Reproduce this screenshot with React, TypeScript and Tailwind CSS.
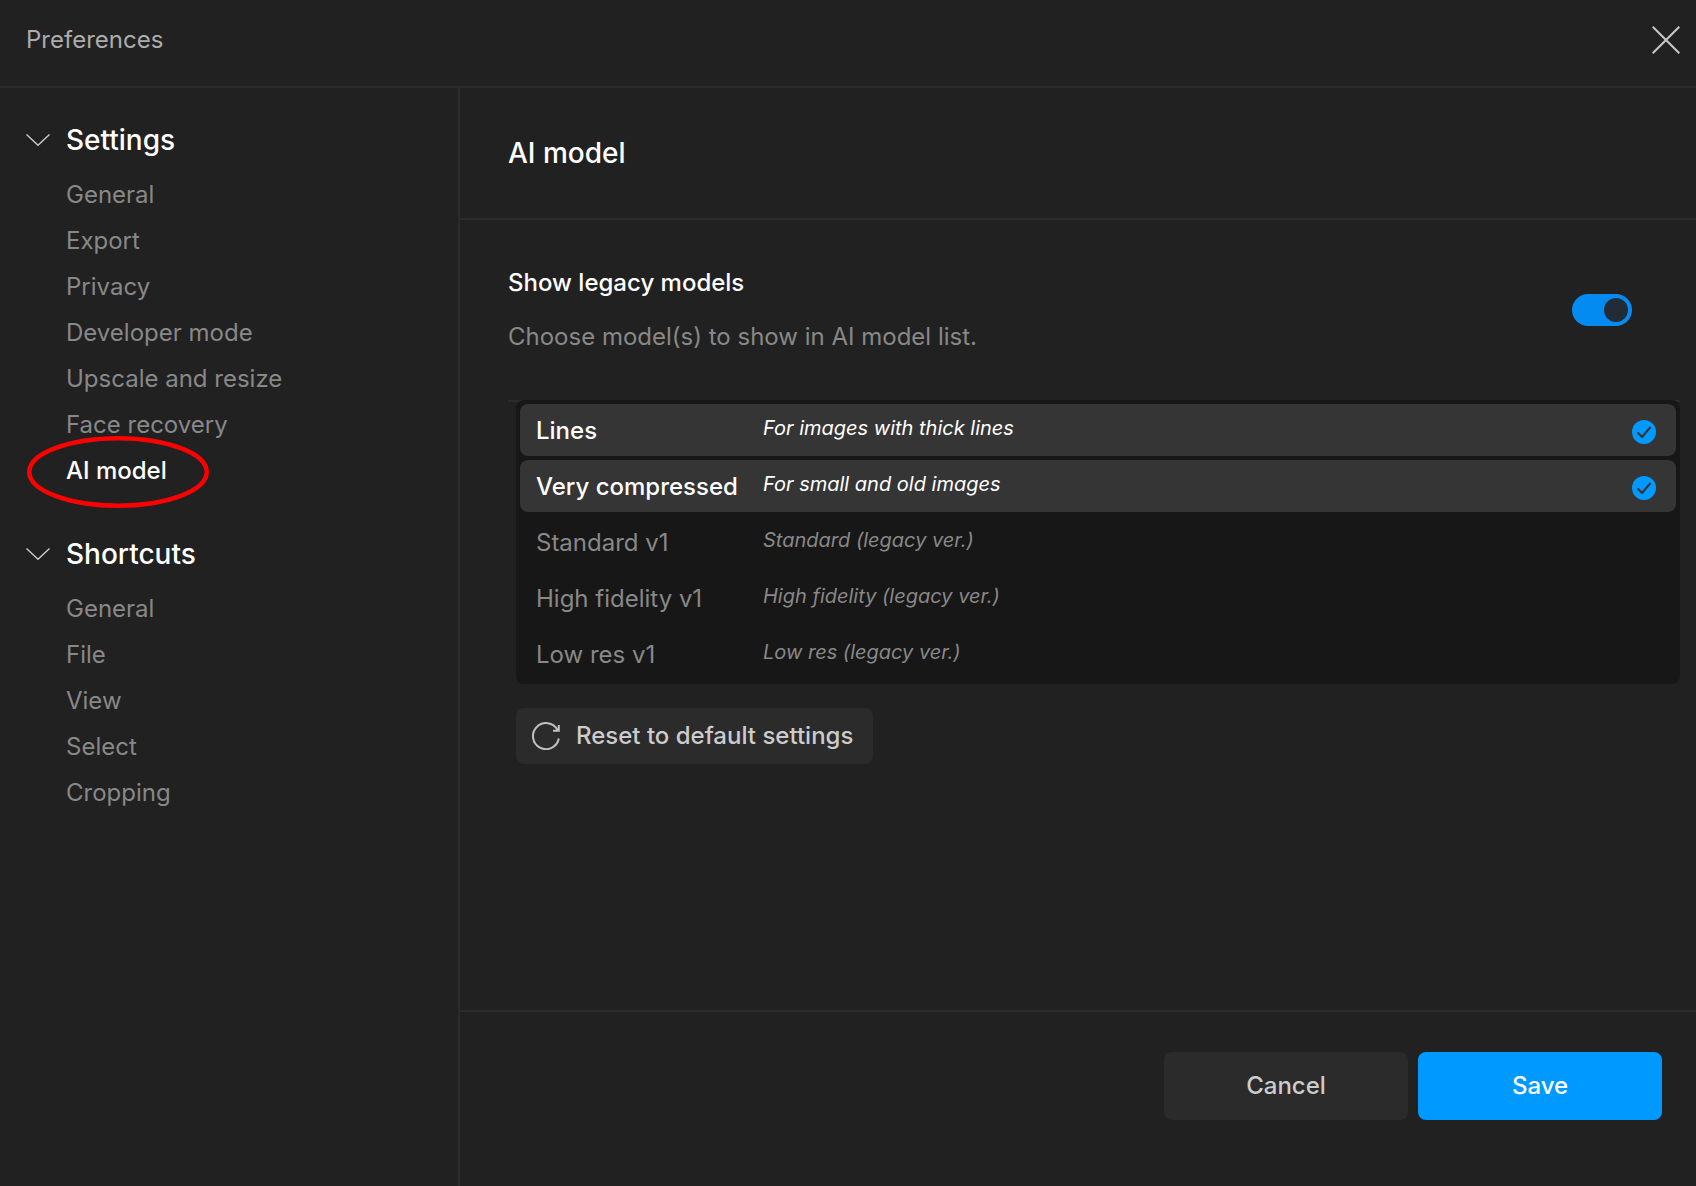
import { useState } from "react";

const groups = [
  {
    title: "Settings",
    items: ["General", "Export", "Privacy", "Developer mode", "Upscale and resize", "Face recovery", "AI model"],
  },
  { title: "Shortcuts", items: ["General", "File", "View", "Select", "Cropping"] },
];

const models = [
  { name: "Lines", note: "For images with thick lines", on: true },
  { name: "Very compressed", note: "For small and old images", on: true },
  { name: "Standard v1", note: "Standard (legacy ver.)", on: false },
  { name: "High fidelity v1", note: "High fidelity (legacy ver.)", on: false },
  { name: "Low res v1", note: "Low res (legacy ver.)", on: false },
];

function Sidebar() {
  return (
    <nav aria-label="Preferences sections" className="flex w-[460px] shrink-0 flex-col gap-9 border-r-2 border-[#2b2b2b] pt-7">
      {groups.map((group) => (
        <section key={group.title}>
          <button type="button" aria-expanded="true" className="flex h-12 items-center pl-[26px] text-[28px] font-medium text-white">
            <svg width="24" height="24" viewBox="0 0 24 24" fill="none" stroke="#c8c8c8" strokeWidth="1.5" aria-hidden="true">
              <path d="M0.5 6.5 12 17.3 23.5 6.5" />
            </svg>
            <span className="pl-4">{group.title}</span>
          </button>
          <ul className="pt-2">
            {group.items.map((item) => {
              const active = item === "AI model";
              return (
                <li key={item} className="relative flex h-[46px] items-center pl-[66px]">
                  <a
                    href="#"
                    aria-current={active ? "page" : undefined}
                    className={active ? "text-2xl font-medium text-white" : "text-2xl text-[#888888]"}
                  >
                    {item}
                  </a>
                  {active && (
                    <svg
                      className="pointer-events-none absolute -top-3 left-[27px]"
                      width="182"
                      height="72"
                      viewBox="0 0 182 72"
                      fill="none"
                      stroke="#ff0000"
                      strokeWidth="4.5"
                      aria-hidden="true"
                    >
                      <ellipse cx="91" cy="36" rx="88.7" ry="33.7" />
                    </svg>
                  )}
                </li>
              );
            })}
          </ul>
        </section>
      ))}
    </nav>
  );
}

function ModelRow({ name, note, on, onChange }: { name: string; note: string; on: boolean; onChange: () => void }) {
  return (
    <li>
      <label className={on ? "flex h-13 items-center rounded-lg bg-[#353535] pr-5 pl-4 text-white" : "flex h-13 items-center rounded-lg pr-5 pl-4 text-[#888888]"}>
        <input type="checkbox" className="sr-only" checked={on} onChange={onChange} />
        <span className={on ? "w-[227px] pt-0.5 text-2xl font-medium" : "w-[227px] pt-0.5 text-2xl"}>{name}</span>
        <span className="flex-1 pb-1 text-xl italic">{note}</span>
        {on && (
          <svg width="24" height="24" viewBox="0 0 24 24" fill="none" className="mt-1" aria-hidden="true">
            <circle cx="12" cy="12" r="12" fill="#0099ff" />
            <path d="M6.2 13 10 17 18 7.6" stroke="#353535" strokeWidth="2.2" strokeLinecap="round" strokeLinejoin="round" />
          </svg>
        )}
      </label>
    </li>
  );
}

export default function App() {
  const [legacy, setLegacy] = useState(true);
  const [chosen, setChosen] = useState(models.map((m) => m.on));

  return (
    <div className="flex min-h-screen flex-col bg-[#212121] font-['Inter',sans-serif]">
      <header className="flex h-22 items-center justify-between border-b-2 border-[#2b2b2b] pr-4 pb-1.5 pl-[26px]">
        <h1 className="text-2xl text-[#acacac]">Preferences</h1>
        <button type="button" aria-label="Close">
          <svg width="28" height="28" viewBox="0 0 28 28" fill="none" stroke="#c8c8c8" strokeWidth="2" aria-hidden="true">
            <path d="M0.7 0.7 27.3 27.3M27.3 0.7 0.7 27.3" />
          </svg>
        </button>
      </header>

      <div className="flex flex-1">
        <Sidebar />
        <main className="flex min-w-0 flex-1 flex-col">
          <div className="flex h-33 items-center border-b-2 border-[#2b2b2b] pl-12">
            <h2 className="text-[28px] font-medium text-white">AI model</h2>
          </div>

          <div className="flex-1 pr-4 pl-12">
            <div className="flex h-[182px] items-center justify-between border-b-2 border-[#2b2b2b] pr-12">
              <div className="flex flex-col gap-[22px]">
                <h3 id="legacy-label" className="text-2xl font-medium text-white">Show legacy models</h3>
                <p className="text-2xl text-[#888888]">Choose model(s) to show in AI model list.</p>
              </div>
              <button
                type="button"
                role="switch"
                aria-checked={legacy}
                aria-labelledby="legacy-label"
                onClick={() => setLegacy(!legacy)}
                className={legacy ? "flex h-8 w-15 justify-end rounded-full bg-[#048bf2] p-1" : "flex h-8 w-15 rounded-full bg-[#484848] p-1"}
              >
                <span className="size-6 rounded-full bg-[#222c37]" />
              </button>
            </div>

            <div className="-mt-0.5 flex flex-col items-start gap-6 pl-2">
              <ul className="flex w-full flex-col gap-1 rounded-lg bg-[#171717] p-1">
                {models.map((m, i) => (
                  <ModelRow
                    key={m.name}
                    name={m.name}
                    note={m.note}
                    on={chosen[i]}
                    onChange={() => setChosen(chosen.map((c, j) => (j === i ? !c : c)))}
                  />
                ))}
              </ul>
              <button type="button" className="flex h-14 items-center gap-4 rounded-lg bg-[#2b2b2b] pr-5 pl-4 text-2xl font-medium text-[#cccccc]">
                <svg width="28" height="28" viewBox="0 0 28 28" fill="none" stroke="#c0c0c0" strokeWidth="2" aria-hidden="true">
                  <path d="M26.8 16.5A13 13 0 1 1 25.5 8M26.8 3V8.8H21" />
                </svg>
                Reset to default settings
              </button>
            </div>
          </div>

          <footer className="flex h-44 items-start justify-end gap-2.5 border-t-2 border-[#2b2b2b] pt-10 pr-[34px]">
            <button type="button" className="h-17 w-61 rounded-lg bg-[#2b2b2b] text-2xl font-medium text-[#cccccc]">Cancel</button>
            <button type="button" className="h-17 w-61 rounded-lg bg-[#0099ff] text-2xl font-medium text-white">Save</button>
          </footer>
        </main>
      </div>
    </div>
  );
}
